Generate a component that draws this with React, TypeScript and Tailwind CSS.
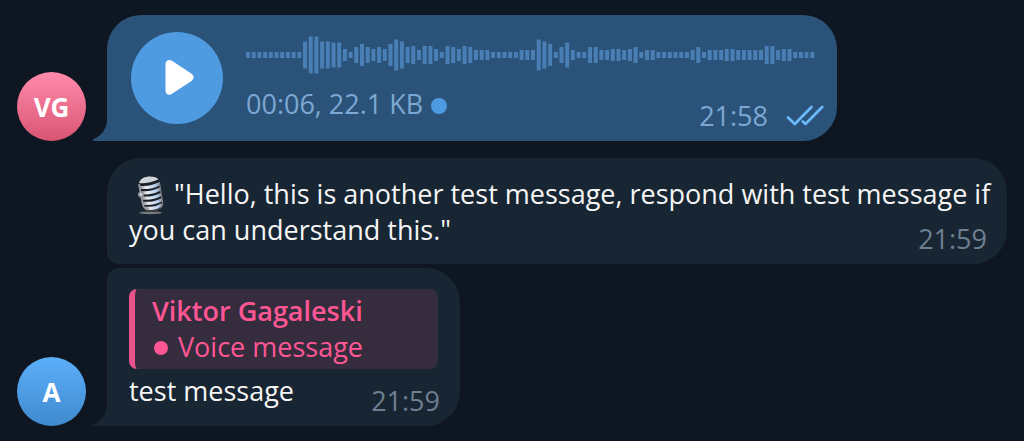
import React from 'react';

// bar heights of the voice recording, in pixels
const WAVEFORM = [
    6, 6, 6, 6, 6, 6, 6, 6, 6, 6, 27, 37, 37, 27, 27, 25, 25, 12, 6, 16, 22, 16, 12, 16, 12, 22, 31, 27, 16, 18, 10, 18,
    18, 12, 6, 18, 16, 12, 18, 16, 10, 10, 10, 6, 6, 6, 6, 6, 10, 10, 10, 31, 27, 22, 6, 16, 25, 10, 6, 6, 16, 16, 10,
    10, 12, 12, 10, 12, 16, 6, 10, 10, 6, 6, 6, 6, 6, 6, 10, 16, 6, 10, 10, 10, 12, 12, 10, 10, 10, 10, 10, 18, 18, 10,
    12, 12, 6, 6, 6, 6,
];

interface AvatarProps {
    initials: string;
    className: string;
}

const Avatar: React.FC<AvatarProps> = ({ initials, className }) => (
    <div
        className={`flex size-[69px] shrink-0 items-center justify-center rounded-full bg-linear-to-b text-[26px] font-bold text-white ${className}`}
    >
        {initials}
    </div>
);

const Tail: React.FC<{ className: string }> = ({ className }) => (
    <svg className={`absolute bottom-0 -left-3.5 h-[21px] w-3.5 ${className}`} viewBox="0 0 14 21" aria-hidden="true">
        <path d="M14 0C13.5 9 8.5 16.5 0 19.3V21H14Z" fill="currentColor" />
    </svg>
);

const Waveform = () => (
    <svg className="h-[38px] w-[570px] max-w-full text-[#4a7fb5]" viewBox="0 0 570 38" aria-hidden="true">
        {WAVEFORM.map((height, i) => (
            <rect key={i} x={i * 5.7} y={19 - height / 2} width="4" height={height} fill="currentColor" />
        ))}
    </svg>
);

const MicIcon = () => (
    <svg
        className="-my-2 mr-2.5 ml-2 inline-block h-10 w-[27px] align-[-3px]"
        viewBox="0 0 27 40"
        role="img"
        aria-label="Studio microphone"
    >
        <defs>
            <linearGradient id="mic-metal" x1="0" y1="0" x2="1" y2="0">
                <stop offset="0" stopColor="#8d9095" />
                <stop offset="0.3" stopColor="#e9edf1" />
                <stop offset="0.75" stopColor="#b9d2f2" />
                <stop offset="1" stopColor="#8a9097" />
            </linearGradient>
        </defs>
        <ellipse cx="13.5" cy="37.8" rx="11.5" ry="1.4" fill="#77797b" />
        <path d="M7 31L23 30L21.5 36.5H10Z" fill="#3a3c40" />
        <path
            d="M1.5 9C1.5 4 7 1.5 13 1.5C18.5 1.5 21.5 3 22 7L25.5 27C26 32 22 34.5 16 34.5C10 34.5 6 32.5 5.5 28Z"
            fill="#1b1f25"
        />
        <path d="M2 8C3 3.5 8 1.5 13 1.5C17 1.5 20 2.2 21.3 4.5C15 7.5 7 9 2 8Z" fill="#cfd4da" />
        <g fill="none" stroke="url(#mic-metal)" strokeWidth="3.2">
            <path d="M3 12.3C10 13 17 11.5 22.5 8.7" />
            <path d="M4 17.6C11 18.3 18 16.8 23.3 14" />
            <path d="M5 22.9C12 23.6 19 22.1 24.3 19.3" />
            <path d="M6 28.2C13 28.9 20 27.4 25.2 24.6" />
            <path d="M8 33C14 34 21 32.5 25 29.5" />
        </g>
        <path d="M2 9L6 30C7 33 9 34 12 34.5" fill="none" stroke="#989ba0" strokeWidth="1.8" />
        <path d="M22.3 7L25.6 27C25.8 30 25 32 22.5 33.5" fill="none" stroke="#7e8187" strokeWidth="1.2" />
        <circle cx="4" cy="19.5" r="3" fill="#8f9297" />
        <circle cx="4" cy="19.5" r="1.4" fill="#d3d6da" />
    </svg>
);

const ReadMark = () => (
    <svg className="h-[22px] w-[38px]" viewBox="0 0 38 22" role="img" aria-label="Read">
        <g fill="none" stroke="#68b8fb" strokeWidth="2.8" strokeLinecap="round" strokeLinejoin="round">
            <path d="M2 12.5L8.8 19L25.5 2" />
            <path d="M16.8 16.5L19.5 19L36.2 2" />
        </g>
    </svg>
);

// text and time share one grid cell, so the time sits in the bottom right corner
const App = () => {
    return (
        <main className="flex min-h-screen flex-col items-start bg-[#0e1621] px-[17px] py-[15px] font-['Open_Sans','Noto_Sans',sans-serif] text-[27px] leading-9 text-[#f5f5f5]">
            <article className="flex max-w-full items-end gap-[21px]">
                <Avatar initials="VG" className="from-[#ff8aac] to-[#d95574]" />
                <div className="relative grid min-w-0 rounded-[34px] rounded-bl-none bg-[#2b5278] text-[#7da8d3]">
                    <Tail className="text-[#2b5278]" />
                    <div className="col-start-1 row-start-1 flex gap-[23px] py-[17px] pr-[21px] pl-6">
                        <button
                            type="button"
                            aria-label="Play voice message"
                            className="flex size-[92px] shrink-0 items-center justify-center rounded-full bg-[#4e9be2]"
                        >
                            <svg className="size-[92px]" viewBox="0 0 92 92" aria-hidden="true">
                                <path
                                    d="M34.5 32.5C34.5 28.5 37.7 26.7 41 28.8L60.5 41.8C63.3 43.7 63.3 47 60.5 48.9L41 61.8C37.7 64 34.5 62.2 34.5 58.2Z"
                                    fill="#fff"
                                />
                            </svg>
                        </button>
                        <div className="min-w-0 pt-1">
                            <Waveform />
                            <div className="mt-3 flex items-center gap-2">
                                <span>00:06, 22.1 KB</span>
                                <span className="mt-1 size-4 rounded-full bg-[#4e9be2]" />
                            </div>
                        </div>
                    </div>
                    <div className="col-start-1 row-start-1 flex items-center gap-[18px] self-end justify-self-end pr-[13px] pb-[7px]">
                        <time dateTime="21:58">21:58</time>
                        <ReadMark />
                    </div>
                </div>
            </article>

            <article className="mt-[17px] ml-[90px] grid rounded-[34px] rounded-bl-xl bg-[#182533]">
                <p className="col-start-1 row-start-1 pt-[18px] pr-2 pb-4 pl-[22px]">
                    <MicIcon />
                    "Hello, this is another test message, respond with test message if you can understand this."
                </p>
                <time
                    dateTime="21:59"
                    className="col-start-1 row-start-1 self-end justify-self-end pr-5 pb-[7px] text-[#6d7f8f]"
                >
                    21:59
                </time>
            </article>

            <article className="mt-1 flex items-end gap-[21px]">
                <Avatar initials="A" className="from-[#5caffa] to-[#408acf]" />
                <div className="relative grid rounded-[34px] rounded-tl-xl rounded-bl-none bg-[#182533]">
                    <Tail className="text-[#182533]" />
                    <div className="col-start-1 row-start-1 px-[22px] pt-[21px] pb-[17px]">
                        <blockquote className="rounded-lg border-l-6 border-[#e9528b] bg-[#352c3e] py-1 pr-[75px] pl-[17px] text-[#ff5694]">
                            <div className="font-semibold">Viktor Gagaleski</div>
                            <div className="flex items-center gap-2.5">
                                <span className="mt-0.5 ml-0.5 size-3.5 rounded-full bg-[#ff5694]" />
                                Voice message
                            </div>
                        </blockquote>
                        <p className="mt-1">test message</p>
                    </div>
                    <time
                        dateTime="21:59"
                        className="col-start-1 row-start-1 self-end justify-self-end pr-5 pb-[7px] text-[#6d7f8f]"
                    >
                        21:59
                    </time>
                </div>
            </article>
        </main>
    );
};

export default App;
